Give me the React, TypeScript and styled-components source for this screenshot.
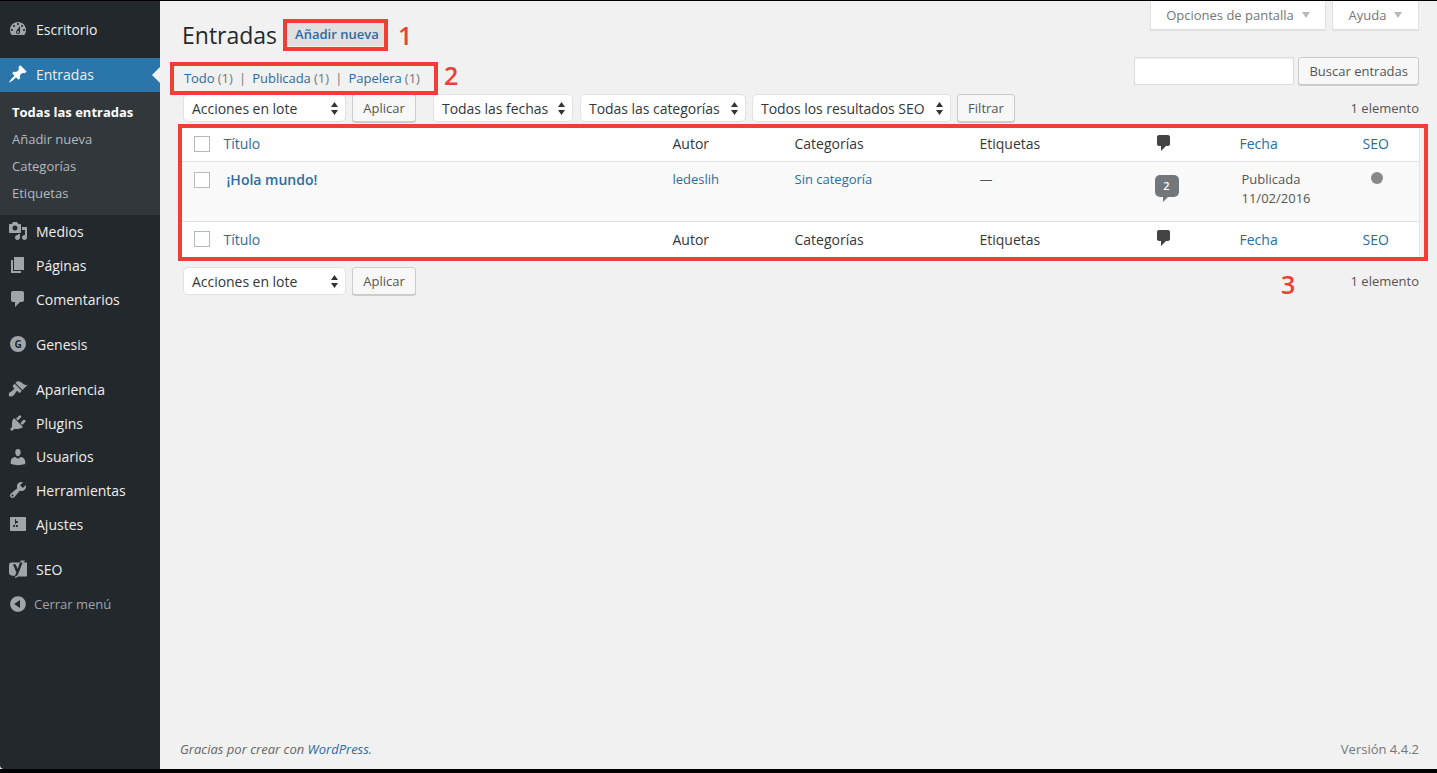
import React from "react";
import styled, { createGlobalStyle } from "styled-components";

const Global = createGlobalStyle`
  html, body { margin: 0; padding: 0; background: #000; height: 100%; overflow: hidden; }
  body { font-family: "Open Sans", "Noto Sans", sans-serif; font-size: 14px; color: #444; }
  * { box-sizing: border-box; }
`;

const Frame = styled.div`
  position: relative; display: flex; height: 768px; margin-top: 1px; background: #f1f1f1;
`;
const Sidebar = styled.nav`
  width: 160px; flex: none; background: #23282d; border-bottom-left-radius: 4px; padding-top: 12px;
`;
const MenuItem = styled.a<{ $active?: boolean; $gap?: boolean; $h?: number }>`
  position: relative; display: flex; align-items: center; height: ${p => p.$h ?? 34}px; padding: 0 0 2px 8px;
  margin-bottom: ${p => (p.$gap ? "11px" : "0")};
  background: ${p => (p.$active ? "#2a75a9" : "transparent")};
  color: #eee; font-size: 14px;
  svg { width: 20px; height: 20px; fill: ${p => (p.$active ? "#fff" : "#a0a5aa")}; flex: none; margin-right: 8px; }
  ${p => p.$active && `&::after { content: ""; position: absolute; right: 0; top: 9px; border: 8px solid transparent; border-right-color: #f1f1f1; border-left: 0; }`}
`;
const SubMenu = styled.div`
  background: #32373c; padding: 7px 0 8px; display: flex; flex-direction: column;
`;
const SubItem = styled.a<{ $current?: boolean }>`
  height: 27px; line-height: 27px; padding-left: 12px; font-size: 13px;
  color: ${p => (p.$current ? "#fff" : "#b4b9be")}; font-weight: ${p => (p.$current ? 700 : 400)};
`;
const Collapse = styled(MenuItem)`
  color: #9ea3a8; font-size: 13px; margin-top: 1px;
  svg { margin-right: 6px; }
`;

const Main = styled.main`
  flex: 1; min-width: 0; display: flex; flex-direction: column; padding: 0 18px 0 20px;
`;
const TopRow = styled.div`
  display: flex; justify-content: space-between; align-items: flex-start; height: 56px;
`;
const TitleGroup = styled.div`
  display: flex; align-items: flex-start; gap: 10px; padding: 22px 0 0 2px;
`;
const Title = styled.h1`
  margin: -1px 0 0; font-size: 23px; font-weight: 400; line-height: 26px; color: #23282d;
`;
const AddNew = styled.a`
  display: block; height: 23px; line-height: 23px; padding: 0 8px; background: #e0e0e0;
  color: #2a6ca3; font-weight: 600; font-size: 13px; white-space: nowrap;
`;
const Tabs = styled.div`display: flex; gap: 6px;`;
const ScreenTab = styled.button<{ $w: number }>`
  width: ${p => p.$w}px; height: 29px; display: flex; align-items: center; justify-content: center; gap: 8px;
  background: #fff; border: 1px solid #e1e1e1; border-top: 0; box-shadow: 0 1px 1px rgba(0,0,0,.06);
  font: 400 13px "Open Sans", sans-serif; color: #72777c; padding: 0;
`;
const Caret = styled.span`
  width: 0; height: 0; border-left: 4px solid transparent; border-right: 4px solid transparent;
  border-top: 6px solid #b4b9be;
`;
const FilterRow = styled.div`
  display: flex; justify-content: space-between; align-items: flex-start; height: 37px;
`;
const Views = styled.div`
  display: flex; padding: 7px 0 0 4px; line-height: 28px; font-size: 13px; white-space: pre; color: #72777c; letter-spacing: -0.06px;
`;
const Separator = styled.span`margin: 0 6.25px;`;
const Link = styled.a`color: #2a6ca3;`;
const Count = styled.span`color: #72777c;`;
const SearchBox = styled.div`display: flex; gap: 4px;`;
const SearchInput = styled.input`
  width: 160px; height: 28px; background: #fff; border: 1px solid #ddd; box-shadow: inset 0 1px 2px rgba(0,0,0,.07);
`;
const Button = styled.button`
  height: 28px; padding: 0 10px; background: #f7f7f7; border: 1px solid #ccc; border-radius: 3px;
  box-shadow: 0 1px 0 #ccc; font: 400 13px "Open Sans", sans-serif; color: #555; white-space: nowrap;
`;
const Toolbar = styled.div`
  display: flex; align-items: center; height: 28px; padding-left: 3px;
`;
const BulkButton = styled(Button)`margin: 0 17px 0 6px; width: 64px; padding: 0;`;
const FilterButton = styled(Button)`width: 58px; padding: 0; margin-left: 6px;`;
const SelectBox = styled.div<{ $w: number; $after?: number }>`
  width: ${p => p.$w}px; height: 28px; margin-right: ${p => p.$after ?? 0}px; flex: none;
  display: flex; align-items: center; justify-content: space-between; padding: 0 7px 0 8px;
  background: #fff; border: 1px solid #e2e2e2; border-radius: 5px; color: #32373c; font-size: 14px; letter-spacing: -0.04px; white-space: nowrap;
  svg { width: 7px; height: 13px; fill: #333; flex: none; }
`;
const ItemCount = styled.span`margin-left: auto; font-size: 13px; color: #555;`;

const Table = styled.table`
  width: 1239px; margin: 5px 0 10px 0; border-collapse: collapse; table-layout: fixed;
  background: #fff; border-right: 1px solid #e5e5e5; border-left: 1px solid #e5e5e5; font-size: 14px;
`;
const HeadCell = styled.th<{ $edge: "top" | "bottom" }>`
  height: ${p => (p.$edge === "top" ? 34 : 36)}px; padding: 0 10px; font-weight: 400; text-align: left; color: #32373c; vertical-align: middle;
  ${p => (p.$edge === "top" ? "border-bottom" : "border-top")}: 1px solid #e1e1e1;
`;
const BodyCell = styled.td`
  height: 60px; padding: 8px 10px 0; vertical-align: top; background: #f9f9f9; font-size: 13px; line-height: 19px; color: #555;
`;
const CheckCell = styled.td<{ $bg?: boolean }>`
  padding: 0 0 0 13px; vertical-align: ${p => (p.$bg ? "top" : "middle")};
  padding-top: ${p => (p.$bg ? "10px" : "0")}; background: ${p => (p.$bg ? "#f9f9f9" : "transparent")};
`;
const HeadCheck = styled(CheckCell).attrs({ as: "th" })<{ $edge: "top" | "bottom" }>`
  ${p => (p.$edge === "top" ? "border-bottom" : "border-top")}: 1px solid #e1e1e1;
`;
const CheckBox = styled.span`
  display: block; width: 16px; height: 16px; background: #fff; border: 1px solid #b4b9be;
`;
const PostTitle = styled.a`
  display: block; margin-left: 3px; font-size: 14px; font-weight: 600; color: #2a6ca3; line-height: 19px;
`;
const ColumnLink = styled.a`color: #2a6ca3;`;
const CommentIcon = styled.svg`
  display: block; width: 20px; height: 20px; margin: -2px 0 0 -3px; fill: #444;
`;
const Bubble = styled.span`
  position: relative; display: block; width: 24px; height: 22px; margin: 5px 0 0 -2px; background: #72777c; border-radius: 5px;
  color: #fff; font-size: 11px; font-weight: 600; line-height: 22px; text-align: center;
  &::after { content: ""; position: absolute; left: 8px; top: 22px; border-top: 5px solid #72777c; border-right: 5px solid transparent; }
`;
const DateText = styled.div`margin-left: 2px; line-height: 19px;`;
const SeoDot = styled.span`
  display: block; width: 12px; height: 12px; margin: 2px 0 0 8px; border-radius: 50%; background: #888;
`;
const Footer = styled.footer`
  margin-top: auto; display: flex; justify-content: space-between; height: 30px; font-size: 13px; line-height: 20px; color: #72777c;
`;
const Thanks = styled.em`font-style: italic; color: #666;`;

const Mark = styled.div<{ $l: number; $t: number; $w: number; $h: number }>`
  position: absolute; left: ${p => p.$l}px; top: ${p => p.$t}px; width: ${p => p.$w}px; height: ${p => p.$h}px;
  border: 4px solid #ee3e36; pointer-events: none;
`;
const MarkNumber = styled.div<{ $l: number; $t: number }>`
  position: absolute; left: ${p => p.$l}px; top: ${p => p.$t}px; color: #ee3e36; font-size: 25px; font-weight: 600; line-height: 30px;
`;

const P = {
  dash: "M3.76 16h12.48c1.1-1.37 1.76-3.11 1.76-5 0-4.42-3.58-8-8-8s-8 3.58-8 8c0 1.89.66 3.63 1.76 5zM10 4c.55 0 1 .45 1 1s-.45 1-1 1-1-.45-1-1 .45-1 1-1zM6 6c.55 0 1 .45 1 1s-.45 1-1 1-1-.45-1-1 .45-1 1-1zm8 0c.55 0 1 .45 1 1s-.45 1-1 1-1-.45-1-1 .45-1 1-1zm-5.37 5.55L12 7v6c0 1.1-.9 2-2 2s-2-.9-2-2c0-.57.24-1.08.63-1.45zM4 10c.55 0 1 .45 1 1s-.45 1-1 1-1-.45-1-1 .45-1 1-1zm12 0c.55 0 1 .45 1 1s-.45 1-1 1-1-.45-1-1 .45-1 1-1zm-5 3c0-.55-.45-1-1-1s-1 .45-1 1 .45 1 1 1 1-.45 1-1z",
  post: "M10.44 3.02l1.82-1.82 6.36 6.35-1.83 1.82c-1.05-.68-2.48-.57-3.41.36l-.75.75c-.92.93-1.04 2.35-.35 3.41l-1.83 1.82-2.41-2.41-2.8 2.79c-.42.42-3.38 2.71-3.8 2.29s1.86-3.39 2.28-3.81l2.79-2.79L4.1 9.36l1.83-1.82c1.05.69 2.48.57 3.4-.36l.75-.75c.93-.92 1.05-2.35.36-3.41z",
  media: "M13 11V4c0-.55-.45-1-1-1h-1.67L9 1H5L3.67 3H2c-.55 0-1 .45-1 1v7c0 .55.45 1 1 1h10c.55 0 1-.45 1-1zM7 4.5c1.38 0 2.5 1.12 2.5 2.5S8.38 9.5 7 9.5 4.5 8.38 4.5 7 5.62 4.5 7 4.5zM14 6h5v10.5c0 1.38-1.12 2.5-2.5 2.5S14 17.88 14 16.5s1.12-2.5 2.5-2.5c.17 0 .34.02.5.05V9h-3V6zm-4 8.05V13h2v3.5c0 1.38-1.12 2.5-2.5 2.5S7 17.88 7 16.5 8.12 14 9.5 14c.17 0 .34.02.5.05z",
  page: "M6 15V2h10v13H6zm-1 1h8v2H3V5h2v11z",
  comment: "M5 2h9c1.1 0 2 .9 2 2v7c0 1.1-.9 2-2 2h-2l-5 5v-5H5c-1.1 0-2-.9-2-2V4c0-1.1.9-2 2-2z",
  appearance: "M14.48 11.06L7.41 3.99l1.5-1.5c.5-.56 2.3-.47 3.51.32 1.21.8 1.43 1.28 2.91 2.1 1.18.64 2.45 1.26 4.45.85zm-.71.71L6.7 4.7 4.93 6.47c-.39.39-.39 1.02 0 1.41l1.06 1.06c.39.39.39 1.03 0 1.42-.6.6-1.43 1.11-2.21 1.69-.35.26-.7.53-1.01.84C1.43 13.23.4 14.03 1 17c1 1 3.37.59 4.67-.82.42-.29.7-.76 1-1.21.61-.93 1.14-2.01 1.7-2.57.39-.39 1.03-.39 1.42 0l1.06 1.06c.39.39 1.02.39 1.41 0z",
  plugins: "M13.11 4.36L9.87 7.6 8 5.73l3.24-3.24c.35-.34 1.05-.2 1.56.32.52.51.66 1.21.31 1.55zm-8 1.77l.91-1.12 9.01 9.01-1.19.84c-.71.71-2.63 1.16-3.82 1.16H6.14L4.9 17.26c-.59.59-1.54.59-2.12 0-.59-.58-.59-1.53 0-2.12l1.24-1.24v-3.88c0-1.13.4-3.19 1.09-3.89zm7.26 3.97l3.24-3.24c.34-.35 1.04-.21 1.55.31.52.51.66 1.21.31 1.55l-3.24 3.25z",
  users: "M10 9.25c-2.27 0-2.73-3.44-2.73-3.44C7 4.02 7.82 2 9.97 2c2.16 0 2.98 2.02 2.71 3.81 0 0-.41 3.44-2.68 3.44zm0 2.57L12.72 10c2.39 0 4.52 2.33 4.52 4.53v2.49s-3.65 1.13-7.24 1.13c-3.65 0-7.24-1.13-7.24-1.13v-2.49c0-2.25 1.94-4.48 4.47-4.48z",
  tools: "M16.68 9.77c-1.34 1.34-3.3 1.67-4.95.99l-5.41 6.52c-.99.99-2.59.99-3.58 0s-.99-2.59 0-3.57l6.52-5.42c-.68-1.65-.35-3.61.99-4.95 1.28-1.28 3.12-1.62 4.72-1.06l-2.89 2.89 2.82 2.82 2.86-2.87c.53 1.58.18 3.39-1.08 4.65zM3.81 16.21c.4.39 1.04.39 1.43 0 .4-.4.4-1.04 0-1.43-.39-.4-1.03-.4-1.43 0-.39.39-.39 1.03 0 1.43z",
  settings: "M18 16V4c0-.55-.45-1-1-1H3c-.55 0-1 .45-1 1v12c0 .55.45 1 1 1h14c.55 0 1-.45 1-1zM8 11h1c.55 0 1 .45 1 1s-.45 1-1 1H8v1.5c0 .28-.22.5-.5.5s-.5-.22-.5-.5V13H6c-.55 0-1-.45-1-1s.45-1 1-1h1V5.5c0-.28.22-.5.5-.5s.5.22.5.5V7h1c.55 0 1 .45 1 1s-.45 1-1 1h-1v5.5c0 .28-.22.5-.5.5s-.5-.22-.5-.5V9z",
  collapse: "M10 2.16c4.33 0 7.84 3.51 7.84 7.84s-3.51 7.84-7.84 7.84S2.16 14.33 2.16 10 5.71 2.16 10 2.16zm2 11.72V6.12L6.18 9.97z",
};

const Icon = ({ d }: { d: string }) => (
  <svg viewBox="0 0 20 20"><path d={d} /></svg>
);
const GenesisIcon = () => (
  <svg viewBox="0 0 20 20">
    <circle cx="10" cy="10" r="8" />
    <text x="10" y="13.5" textAnchor="middle" fontSize="10" fontWeight="700" fontFamily="Open Sans, sans-serif" fill="#23282d">G</text>
  </svg>
);
const YoastIcon = () => (
  <svg viewBox="0 0 20 20">
    <path d="M3.5 3.5H19v12.5c0 1-.7 1.5-1.5 1.5H9.8l1.6-3.6L15.4 1.5h-2.7L9.7 10 7.6 5.2H4.9l3.5 8.2-1.5 3.4C4.9 17 1 16.6 1 13.5V6c0-1.6 1-2.5 2.5-2.5z" />
    <path d="M15.6 1.2h1.2L11.4 15c-.8 2.2-2.2 3.6-4.4 4v-1.2c1.4-.4 2.6-1.4 3.3-3.2z" />
  </svg>
);
const Arrows = () => (
  <svg viewBox="0 0 7 13"><path d="M3.5 0L7 5H0zM3.5 13L0 8h7z" /></svg>
);

const widths = [33, 449, 122, 185, 177, 83, 123, 67];

function ColumnHeaders({ edge }: { edge: "top" | "bottom" }) {
  return (
    <tr>
      <HeadCheck $edge={edge}><CheckBox /></HeadCheck>
      <HeadCell $edge={edge}><ColumnLink>Título</ColumnLink></HeadCell>
      <HeadCell $edge={edge}>Autor</HeadCell>
      <HeadCell $edge={edge}>Categorías</HeadCell>
      <HeadCell $edge={edge}>Etiquetas</HeadCell>
      <HeadCell $edge={edge}><CommentIcon viewBox="0 0 20 20"><path d={P.comment} /></CommentIcon></HeadCell>
      <HeadCell $edge={edge}><ColumnLink>Fecha</ColumnLink></HeadCell>
      <HeadCell $edge={edge}><ColumnLink>SEO</ColumnLink></HeadCell>
    </tr>
  );
}

function BulkBar() {
  return (
    <>
      <SelectBox $w={163}>Acciones en lote<Arrows /></SelectBox>
      <BulkButton>Aplicar</BulkButton>
    </>
  );
}

export default function App() {
  return (
    <>
      <Global />
      <Frame>
        <Sidebar>
          <MenuItem $gap><Icon d={P.dash} />Escritorio</MenuItem>
          <MenuItem $active><Icon d={P.post} />Entradas</MenuItem>
          <SubMenu>
            <SubItem $current>Todas las entradas</SubItem>
            <SubItem>Añadir nueva</SubItem>
            <SubItem>Categorías</SubItem>
            <SubItem>Etiquetas</SubItem>
          </SubMenu>
          <MenuItem><Icon d={P.media} />Medios</MenuItem>
          <MenuItem><Icon d={P.page} />Páginas</MenuItem>
          <MenuItem $gap><Icon d={P.comment} />Comentarios</MenuItem>
          <MenuItem $gap><GenesisIcon />Genesis</MenuItem>
          <MenuItem><Icon d={P.appearance} />Apariencia</MenuItem>
          <MenuItem><Icon d={P.plugins} />Plugins</MenuItem>
          <MenuItem $h={33}><Icon d={P.users} />Usuarios</MenuItem>
          <MenuItem><Icon d={P.tools} />Herramientas</MenuItem>
          <MenuItem $gap><Icon d={P.settings} />Ajustes</MenuItem>
          <MenuItem><YoastIcon />SEO</MenuItem>
          <Collapse><Icon d={P.collapse} />Cerrar menú</Collapse>
        </Sidebar>
        <Main>
          <TopRow>
            <TitleGroup>
              <Title>Entradas</Title>
              <AddNew>Añadir nueva</AddNew>
            </TitleGroup>
            <Tabs>
              <ScreenTab $w={176}>Opciones de pantalla<Caret /></ScreenTab>
              <ScreenTab $w={87}>Ayuda<Caret /></ScreenTab>
            </Tabs>
          </TopRow>
          <FilterRow>
            <Views>
              <Link>Todo</Link><Count> (1)</Count><Separator>|</Separator>
              <Link>Publicada</Link><Count> (1)</Count><Separator>|</Separator>
              <Link>Papelera</Link><Count> (1)</Count>
            </Views>
            <SearchBox>
              <SearchInput />
              <Button>Buscar entradas</Button>
            </SearchBox>
          </FilterRow>
          <Toolbar>
            <BulkBar />
            <SelectBox $w={140} $after={7}>Todas las fechas<Arrows /></SelectBox>
            <SelectBox $w={166} $after={6}>Todas las categorías<Arrows /></SelectBox>
            <SelectBox $w={199}>Todos los resultados SEO<Arrows /></SelectBox>
            <FilterButton>Filtrar</FilterButton>
            <ItemCount>1 elemento</ItemCount>
          </Toolbar>
          <Table>
            <colgroup>
              {widths.map((w, i) => <col key={i} style={{ width: w }} />)}
            </colgroup>
            <thead><ColumnHeaders edge="top" /></thead>
            <tbody>
              <tr>
                <CheckCell $bg><CheckBox /></CheckCell>
                <BodyCell><PostTitle>¡Hola mundo!</PostTitle></BodyCell>
                <BodyCell><ColumnLink>ledeslih</ColumnLink></BodyCell>
                <BodyCell><ColumnLink>Sin categoría</ColumnLink></BodyCell>
                <BodyCell>—</BodyCell>
                <BodyCell><Bubble>2</Bubble></BodyCell>
                <BodyCell><DateText>Publicada<br />11/02/2016</DateText></BodyCell>
                <BodyCell><SeoDot /></BodyCell>
              </tr>
            </tbody>
            <tfoot><ColumnHeaders edge="bottom" /></tfoot>
          </Table>
          <Toolbar>
            <BulkBar />
            <ItemCount>1 elemento</ItemCount>
          </Toolbar>
          <Footer>
            <Thanks>Gracias por crear con <Link>WordPress</Link>.</Thanks>
            <span>Versión 4.4.2</span>
          </Footer>
        </Main>
        <Mark $l={283} $t={18} $w={105} $h={32} />
        <Mark $l={170} $t={61} $w={268} $h={33} />
        <Mark $l={178} $t={123} $w={1250} $h={137} />
        <MarkNumber $l={398} $t={19}>1</MarkNumber>
        <MarkNumber $l={444} $t={59}>2</MarkNumber>
        <MarkNumber $l={1281} $t={268}>3</MarkNumber>
      </Frame>
    </>
  );
}
